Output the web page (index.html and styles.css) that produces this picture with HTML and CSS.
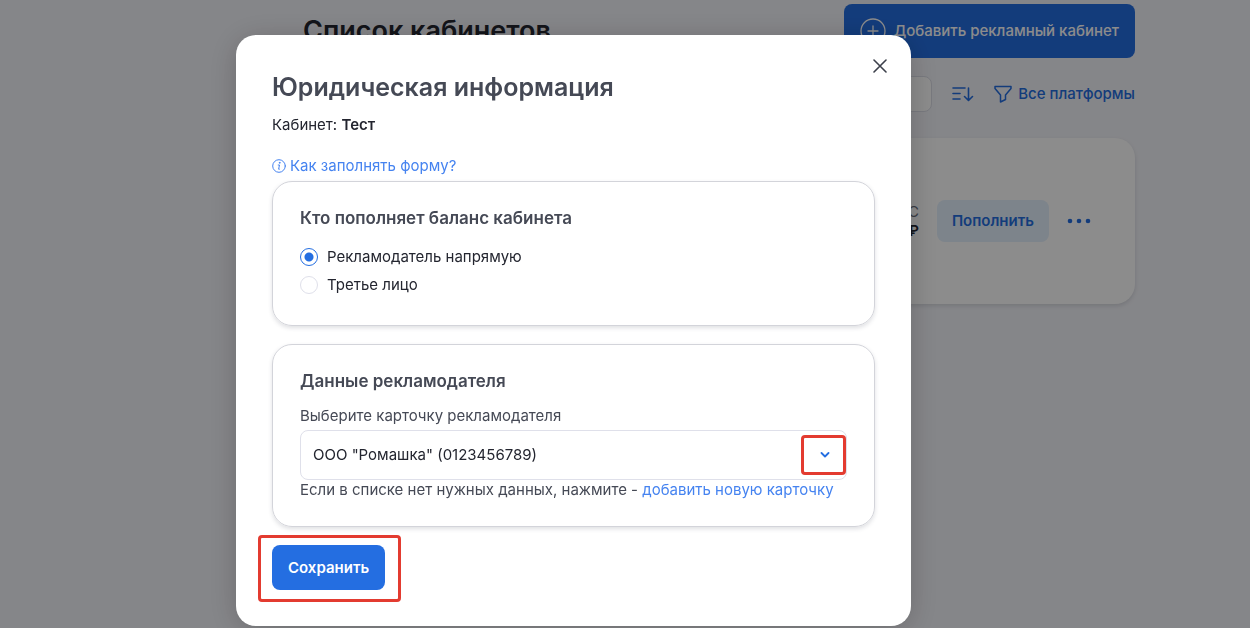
FILE: index.html
```html
<!DOCTYPE html>
<html lang="ru">
<head>
  <meta charset="UTF-8">
  <meta name="viewport" content="width=device-width, initial-scale=1.0">
  <title>Список кабинетов</title>
  <link rel="stylesheet" href="styles.css">
</head>
<body>
  <main class="page">
    <header class="pageHeader">
      <h1 class="pageTitle">Список кабинетов</h1>
      <button type="button" class="btn addBtn">
        <svg width="26" height="26" viewBox="0 0 26 26" fill="none" stroke="currentColor" stroke-width="1.3" stroke-linecap="round">
          <circle cx="13" cy="13" r="12"/>
          <path d="M13 8v10M8 13h10"/>
        </svg>
        Добавить рекламный кабинет
      </button>
    </header>

    <section class="filters">
      <input type="search" class="searchInput" aria-label="Поиск">
      <button type="button" class="linkBtn" aria-label="Сортировка">
        <svg width="22" height="18" viewBox="0 0 22 18" fill="none" stroke="currentColor" stroke-width="1.6" stroke-linecap="round" stroke-linejoin="round">
          <path d="M1 3h12M1 8.500h7M1 14h7M16.500 3v12M12.500 11.500l4 4 4-4"/>
        </svg>
      </button>
      <button type="button" class="linkBtn">
        <svg width="18" height="18" viewBox="0 0 18 18" fill="none" stroke="currentColor" stroke-width="1.500" stroke-linejoin="round">
          <path d="M1 1.500h16v2L11.500 10v4.500L6.500 17v-7L1 3.500z"/>
        </svg>
        Все платформы
      </button>
    </section>

    <section class="cabinet">
      <p class="balance">С<br><b>₽</b></p>
      <button type="button" class="btn topUpBtn">Пополнить</button>
      <button type="button" class="linkBtn" aria-label="Ещё">
        <svg width="24" height="6" viewBox="0 0 24 6" fill="currentColor">
          <circle cx="3" cy="3" r="2.300"/>
          <circle cx="12" cy="3" r="2.300"/>
          <circle cx="21" cy="3" r="2.300"/>
        </svg>
      </button>
    </section>
  </main>

  <div class="overlay">
    <form class="modal" role="dialog" aria-labelledby="modalTitle">
      <button type="button" class="closeBtn" aria-label="Закрыть">
        <svg width="14" height="14" viewBox="0 0 14 14" fill="none" stroke="currentColor" stroke-width="1.600" stroke-linecap="round">
          <path d="M1 1l12 12M13 1L1 13"/>
        </svg>
      </button>

      <h2 id="modalTitle" class="modalTitle">Юридическая информация</h2>
      <p class="cabinetName">Кабинет: <b>Тест</b></p>
      <a href="#" class="link helpLink">
        <svg width="14" height="14" viewBox="0 0 14 14" fill="none" stroke="currentColor" stroke-linecap="round" stroke-linejoin="round">
          <circle cx="7" cy="7" r="6.300"/>
          <path d="M6.200 6h1.300l-.9 4.200h.8"/>
          <circle cx="7.600" cy="3.800" r=".4" fill="currentColor"/>
        </svg>
        Как заполнять форму?
      </a>

      <fieldset class="box">
        <h3 class="boxTitle">Кто пополняет баланс кабинета</h3>
        <label class="radio"><input type="radio" name="payer" checked>Рекламодатель напрямую</label>
        <label class="radio"><input type="radio" name="payer">Третье лицо</label>
      </fieldset>

      <section class="box">
        <h3 class="boxTitle">Данные рекламодателя</h3>
        <label for="advertiser" class="fieldLabel">Выберите карточку рекламодателя</label>
        <div class="selectWrapper">
          <select id="advertiser" class="select">
            <option>ООО "Ромашка" (0123456789)</option>
          </select>
          <svg class="selectArrow" width="10" height="6" viewBox="0 0 10 6" fill="none" stroke="currentColor" stroke-width="1.800" stroke-linecap="round" stroke-linejoin="round">
            <path d="M1.500 1L5 4.500 8.500 1"/>
          </svg>
          <span class="mark markArrow"></span>
        </div>
        <p class="hint">Если в списке нет нужных данных, нажмите - <a href="#" class="link">добавить новую карточку</a></p>
      </section>

      <div class="saveWrapper">
        <button type="submit" class="btn saveBtn">Сохранить</button>
        <span class="mark markSave"></span>
      </div>
    </form>
  </div>
</body>
</html>
```
FILE: styles.css
```css
* {
  box-sizing: border-box;
}

body {
  margin: 0;
  min-height: 100vh;
  background-color: #f3f4f9;
  color: #23252f;
  font-family: Inter, "Liberation Sans", sans-serif;
  font-size: 15px;
  line-height: 20px;
}

h1, h2, h3, p {
  margin: 0;
}

button, input, select {
  font: inherit;
}

button {
  border: 0;
  padding: 0;
  background-color: transparent;
  cursor: pointer;
}

svg {
  display: block;
  flex: none;
}

.page {
  padding: 4px 115px 0 303px;
}

.pageHeader {
  display: flex;
  justify-content: space-between;
  align-items: center;
}

.pageTitle {
  font-size: 27px;
  line-height: 32px;
  font-weight: 600;
}

.btn {
  border-radius: 8px;
  background-color: #246ee1;
  color: white;
  font-weight: 600;
}

.addBtn {
  display: flex;
  align-items: center;
  gap: 8px;
  height: 54px;
  padding: 0 16px;
  font-weight: 500;
}

.filters {
  display: flex;
  align-items: center;
  gap: 20px;
  margin-top: 18px;
}

.searchInput {
  flex: 1;
  height: 36px;
  border: 1px solid #dcdee8;
  border-radius: 8px;
  background-color: white;
}

.linkBtn {
  display: flex;
  align-items: center;
  gap: 6px;
  color: #246ee1;
  font-weight: 500;
}

.cabinet {
  display: flex;
  align-items: center;
  justify-content: flex-end;
  gap: 18px;
  height: 166px;
  margin-top: 26px;
  padding-right: 44px;
  border-radius: 20px;
  background-color: white;
  box-shadow: 0 2px 4px rgba(40, 44, 70, 0.15);
}

.balance {
  color: #6c7080;
  line-height: 19px;
  text-align: right;
}

.balance b {
  color: #23252f;
  font-weight: 600;
}

.topUpBtn {
  height: 42px;
  padding: 0 15px;
  background-color: #e4f0fd;
  color: #246ee1;
}

.overlay {
  position: fixed;
  inset: 0;
  overflow: auto;
  padding: 35px 339px 0 236px;
  background-color: rgba(0, 0, 0, 0.45);
}

.modal {
  position: relative;
  padding: 36px;
  border-radius: 20px;
  background-color: white;
  box-shadow: 0 4px 30px rgba(0, 0, 0, 0.2);
}

.closeBtn {
  position: absolute;
  top: 24px;
  right: 24px;
  color: #3c404b;
}

.modalTitle {
  color: #454955;
  font-size: 25px;
  line-height: 32px;
  font-weight: 600;
}

.cabinetName {
  margin-top: 12px;
}

.cabinetName b {
  font-weight: 600;
}

.link {
  color: #4583f0;
  text-decoration: none;
}

.helpLink {
  display: flex;
  align-items: center;
  gap: 4px;
  margin-top: 21px;
}

.box {
  margin: 5px 0 0;
  padding: 26px 27px;
  border: 1px solid #d3d4da;
  border-radius: 20px;
  box-shadow: 0 2px 4px rgba(40, 44, 70, 0.15);
}

.box + .box {
  margin-top: 18px;
}

.boxTitle {
  margin-bottom: 15px;
  color: #454955;
  font-size: 17px;
  line-height: 20px;
  font-weight: 600;
}

.radio {
  display: flex;
  align-items: center;
  gap: 9px;
  height: 28px;
}

.radio input {
  appearance: none;
  width: 18px;
  height: 18px;
  margin: 0;
  border: 1px solid #dfe0ea;
  border-radius: 50%;
  background-color: white;
}

.radio input:checked {
  border-color: #246ee1;
  background-image: radial-gradient(circle, #246ee1 4px, transparent 5px);
}

.fieldLabel, .hint {
  color: #454955;
}

.selectWrapper {
  position: relative;
  margin-top: 4px;
}

.select {
  display: block;
  appearance: none;
  width: 100%;
  height: 50px;
  padding: 0 12px;
  border: 1px solid #dfe0ea;
  border-radius: 8px;
  background-color: white;
  color: #23252f;
}

.selectArrow {
  position: absolute;
  top: 22px;
  right: 17px;
  color: #246ee1;
}

.saveWrapper {
  position: relative;
  width: fit-content;
  margin-top: 18px;
}

.saveBtn {
  display: block;
  height: 45px;
  padding: 0 16px;
}

/* red highlight frames */
.mark {
  position: absolute;
  border: 3px solid #e33b30;
  border-radius: 4px;
  pointer-events: none;
}

.markArrow {
  top: 5px;
  right: 1px;
  width: 45px;
  height: 40px;
}

.markSave {
  inset: -10px -16px -12px -14px;
}
```
